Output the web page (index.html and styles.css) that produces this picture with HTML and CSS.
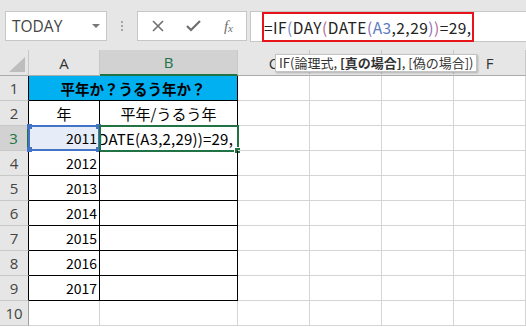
FILE: index.html
```html
<!DOCTYPE html>
<html>
<head>
    <title>IF DAY DATE</title>
    <link rel="stylesheet" href="styles.css">
</head>
<body>
    <div class="toolbar">
        <div class="namebox">
            <span>TODAY</span>
            <span class="caret"></span>
        </div>
        <div class="dots"><i></i><i></i><i></i></div>
        <div class="fbuttons">
            <svg width="12" height="12" viewBox="0 0 12 12"><path d="M1 1 L11 11 M11 1 L1 11" stroke="#6f6f6f" stroke-width="1.6" fill="none"/></svg>
            <svg width="15" height="12" viewBox="0 0 15 12"><path d="M1 6 L5 10 L14 1" stroke="#6f6f6f" stroke-width="2.2" fill="none"/></svg>
            <span class="fx">f<sub>x</sub></span>
        </div>
        <div class="formula">
            <span class="redbox">=IF<b class="p1">(</b>DAY<b class="p2">(</b>DATE<b class="p3">(</b><b class="ref">A3</b>,2,29<b class="p3">)</b><b class="p2">)</b>=29,<i class="cursor"></i></span>
        </div>
    </div>

    <div class="sheet">
        <div class="corner"><span class="tri"></span></div>
        <div class="ch">A</div>
        <div class="ch sel">B</div>
        <div class="ch">C</div>
        <div class="ch">D</div>
        <div class="ch">E</div>
        <div class="ch">F</div>

        <div class="rh">1</div>
        <div class="c t title">平年か？うるう年か？</div>
        <div class="c"></div><div class="c"></div><div class="c"></div><div class="c"></div>

        <div class="rh">2</div>
        <div class="c t mid">年</div>
        <div class="c t mid">平年/うるう年</div>
        <div class="c"></div><div class="c"></div><div class="c"></div><div class="c"></div>

        <div class="rh rsel">3</div>
        <div class="c t num refcell">2011
            <span class="blue"><i class="h tl"></i><i class="h tr"></i><i class="h bl"></i><i class="h br"></i></span>
        </div>
        <div class="c t edit"><span class="etext">=IF(DAY(DATE(A3,2,29))=29,</span>
            <span class="green"><i class="fill"></i></span>
        </div>
        <div class="c"></div><div class="c"></div><div class="c"></div><div class="c"></div>

        <div class="rh">4</div>
        <div class="c t num">2012</div>
        <div class="c t"></div>
        <div class="c"></div><div class="c"></div><div class="c"></div><div class="c"></div>

        <div class="rh">5</div>
        <div class="c t num">2013</div>
        <div class="c t"></div>
        <div class="c"></div><div class="c"></div><div class="c"></div><div class="c"></div>

        <div class="rh">6</div>
        <div class="c t num">2014</div>
        <div class="c t"></div>
        <div class="c"></div><div class="c"></div><div class="c"></div><div class="c"></div>

        <div class="rh">7</div>
        <div class="c t num">2015</div>
        <div class="c t"></div>
        <div class="c"></div><div class="c"></div><div class="c"></div><div class="c"></div>

        <div class="rh">8</div>
        <div class="c t num">2016</div>
        <div class="c t"></div>
        <div class="c"></div><div class="c"></div><div class="c"></div><div class="c"></div>

        <div class="rh">9</div>
        <div class="c t num">2017</div>
        <div class="c t"></div>
        <div class="c"></div><div class="c"></div><div class="c"></div><div class="c"></div>

        <div class="rh last">10</div>
        <div class="c"></div><div class="c"></div>
        <div class="c"></div><div class="c"></div><div class="c"></div><div class="c"></div>

        <div class="tip">IF(論理式, <b>[真の場合]</b>, [偽の場合])</div>
    </div>
</body>
</html>
```

FILE: styles.css
```css
body { margin: 0; background: #fff; font-family: "Noto Sans CJK JP", "Noto Sans", sans-serif; color: #000; overflow: hidden; }

.toolbar { height: 50px; background: #e6e6e6; display: flex; align-items: flex-start; padding-top: 11px; box-sizing: border-box; }
.namebox { width: 102px; height: 30px; margin-left: 5px; box-sizing: border-box; background: #fff; border: 1px solid #c6c6c6; display: flex; align-items: center; justify-content: space-between; padding: 0 6px 0 6px; font-family: "Open Sans", "Noto Sans", sans-serif; font-size: 15.5px; color: #444; }
.caret { width: 0; height: 0; border-left: 4px solid transparent; border-right: 4px solid transparent; border-top: 4px solid #777; }
.dots { width: 30px; height: 30px; display: flex; flex-direction: column; align-items: center; justify-content: center; gap: 2px; }
.dots i { width: 2px; height: 2px; background: #a5a5a5; }
.fbuttons { width: 110px; height: 30px; box-sizing: border-box; background: #fff; border: 1px solid #c6c6c6; display: flex; align-items: center; justify-content: space-between; padding: 0 13px 0 14px; }
.fx { font-family: "Liberation Serif", serif; font-style: italic; font-size: 15px; color: #6f6f6f; line-height: 1; }
.fx sub { font-size: 11px; vertical-align: -1px; }
.formula { flex: 1; height: 31px; margin-left: 3px; box-sizing: border-box; background: #fff; border: 1px solid #c6c6c6; border-right: none; padding: 1px 0 0 11px; }
.redbox { display: inline-flex; align-items: center; width: 212px; height: 30px; box-sizing: border-box; border: 2px solid #e8131b; margin-top: -1px; font-size: 15.5px; letter-spacing: 0.45px; color: #222; white-space: nowrap; }
.redbox b { font-weight: normal; }
.p1 { color: #6d8bc7; }
.p2 { color: #b0679a; }
.p3 { color: #8c6cb5; }
.ref { color: #5a79c0; }
.cursor { display: inline-block; width: 1px; height: 24px; background: #000; margin-left: 1px; }

.sheet { position: relative; display: grid; grid-template-columns: 29px 71px 138px 72px 72px 72px 72px; grid-template-rows: 26px repeat(10, 25px); }
.corner { background: #e6e6e6; border-right: 1px solid #c8c8c8; border-bottom: 1px solid #ababab; position: relative; }
.tri { position: absolute; right: 3px; bottom: 3px; width: 0; height: 0; border-left: 16px solid transparent; border-bottom: 15px solid #bdbdbd; }
.ch { background: #e6e6e6; border-right: 1px solid #c8c8c8; border-bottom: 1px solid #ababab; display: flex; align-items: center; justify-content: center; font-family: "Open Sans", "Noto Sans", sans-serif; font-size: 15px; color: #333; }
.ch.sel { background: #d2d2d2; color: #217346; border-bottom: 2px solid #217346; }
.rh { background: #e6e6e6; border-right: 1px solid #000; border-bottom: 1px solid #c8c8c8; display: flex; align-items: center; justify-content: center; font-family: "Open Sans", "Noto Sans", sans-serif; font-size: 15px; color: #444; }
.rh.last { border-right-color: #9e9e9e; }
.rh.rsel { background: #d2d2d2; color: #217346; border-right: 2px solid #217346; }

.c { border-right: 1px solid #d4d4d4; border-bottom: 1px solid #d4d4d4; position: relative; display: flex; align-items: center; font-size: 14px; white-space: nowrap; }
.c.t { border-right-color: #000; border-bottom-color: #000; }
.title { grid-column: span 2; background: #00b0f0; justify-content: center; font-weight: bold; font-size: 14.5px; }
.mid { justify-content: center; font-size: 15px; }
.num { justify-content: flex-end; padding-right: 2px; }
.refcell { background: #e6edf8; }
.blue { position: absolute; left: -1px; top: -1px; right: -1px; bottom: -1px; border: 2px solid #4472c4; }
.h { position: absolute; width: 5px; height: 5px; background: #4472c4; }
.tl { left: -3px; top: -3px; }
.tr { right: -3px; top: -3px; }
.bl { left: -3px; bottom: -3px; }
.br { right: -3px; bottom: -3px; }
.edit { justify-content: flex-end; }
.etext { display: flex; justify-content: flex-end; width: 100%; overflow: hidden; padding-right: 4px; font-size: 15px; letter-spacing: 0.2px; }
.green { position: absolute; left: -1px; top: -1px; right: -2px; bottom: -2px; border: 2px solid #217346; }
.fill { position: absolute; right: -4px; bottom: -4px; width: 5px; height: 5px; background: #217346; border: 1px solid #fff; }

.tip { position: absolute; left: 275px; top: 4px; height: 18px; box-sizing: border-box; padding: 0 3px; background: #fff; border: 1px solid #c4c4c4; box-shadow: 1px 1px 2px rgba(0,0,0,0.25); font-size: 13px; line-height: 16px; color: #333; white-space: nowrap; }
```
